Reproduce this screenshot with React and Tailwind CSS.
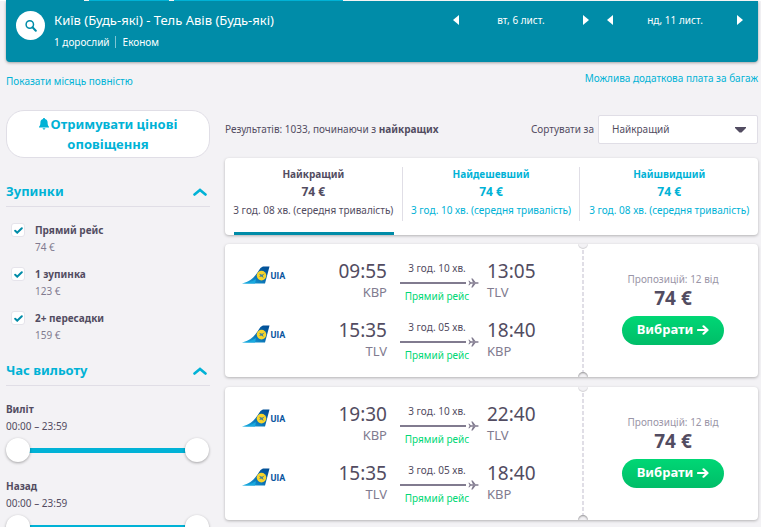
import { useState } from "react";

const STOPS = [
  { id: "direct", label: "Прямий рейс", price: "74 €" },
  { id: "one", label: "1 зупинка", price: "123 €" },
  { id: "two", label: "2+ пересадки", price: "159 €" },
];

const SORTS = [
  { id: "best", label: "Найкращий", price: "74 €", time: "3 год. 08 хв. (середня тривалість)" },
  { id: "cheap", label: "Найдешевший", price: "74 €", time: "3 год. 10 хв. (середня тривалість)" },
  { id: "fast", label: "Найшвидший", price: "74 €", time: "3 год. 08 хв. (середня тривалість)" },
];

const FLIGHTS = [
  {
    id: 1,
    price: "74 €",
    legs: [
      { depart: "09:55", from: "KBP", time: "3 год. 10 хв.", arrive: "13:05", to: "TLV" },
      { depart: "15:35", from: "TLV", time: "3 год. 05 хв.", arrive: "18:40", to: "KBP" },
    ],
  },
  {
    id: 2,
    price: "74 €",
    legs: [
      { depart: "19:30", from: "KBP", time: "3 год. 10 хв.", arrive: "22:40", to: "TLV" },
      { depart: "15:35", from: "TLV", time: "3 год. 05 хв.", arrive: "18:40", to: "KBP" },
    ],
  },
];

const Triangle = ({ left }) => (
  <svg width="6" height="10" viewBox="0 0 6 10" fill="currentColor" aria-hidden="true">
    <path d={left ? "M6 0v10L0 5z" : "M0 0v10l6-5z"} />
  </svg>
);

const UiaLogo = () => (
  <svg width="44" height="18" viewBox="0 0 44 18" role="img" aria-label="UIA">
    <defs>
      <linearGradient id="tail" x1="0" y1="1" x2="1" y2="0">
        <stop offset="0" stopColor="#1bb4e6" />
        <stop offset="0.5" stopColor="#0a6cb0" />
        <stop offset="1" stopColor="#004b93" />
      </linearGradient>
    </defs>
    <path d="M0 17.400C8 16 12 11.500 15.500 6.500 18 2.800 19 .5 22 .5h5.500L23 17.400z" fill="url(#tail)" />
    <path d="M0 17.400c6-.2 10-1.600 14-4.400l-1 4.400z" fill="#19a9df" />
    <circle cx="19.500" cy="9.600" r="4.800" fill="#f7d52b" />
    <path d="M17 7.800l3 .9 2.600-1.200-1.900 2.300 1 2.300-2.300-1.700-2.300.6 1.300-1.500z" fill="#3d7f9c" />
    <text
      x="28.500"
      y="13"
      fontSize="9"
      fontWeight="700"
      fill="#0a559f"
      className="font-[Roboto,sans-serif]"
    >
      UIA
    </text>
  </svg>
);

const Plane = () => (
  <svg width="11" height="10" viewBox="0 0 22 20" fill="#817b8f" aria-hidden="true">
    <path d="M3 8.600h15.500c1.800 0 3 .7 3 1.400s-1.200 1.400-3 1.400H3z" />
    <path d="M10 9L6.500.8h2.800L15.500 9zM10 11l-3.500 8.200h2.800L15.500 11z" />
    <path d="M3.200 9.500L.5 5.500h2.200L6.500 9.500zM3.200 10.500L.5 14.500h2.200l3.800-4z" />
  </svg>
);

const DateStepper = ({ label }) => (
  <div className="flex w-[136px] items-center justify-between">
    <button type="button" aria-label="Попередній день">
      <Triangle left />
    </button>
    <span>{label}</span>
    <button type="button" aria-label="Наступний день">
      <Triangle />
    </button>
  </div>
);

const Section = ({ title, children }) => {
  const [open, setOpen] = useState(true);
  return (
    <section>
      <h2 className="border-b border-[#e0dee6]">
        <button
          type="button"
          onClick={() => setOpen(!open)}
          className="flex h-7 w-full items-center justify-between pr-[3px] text-[13px] font-bold text-[#00b2d6]"
        >
          {title}
          <svg width="14" height="8" viewBox="0 0 14 8" className={open ? "" : "rotate-180"} aria-hidden="true">
            <path d="M1.500 6.500L7 2l5.500 4.500" fill="none" stroke="currentColor" strokeWidth="2.600" strokeLinecap="round" />
          </svg>
        </button>
      </h2>
      {open && children}
    </section>
  );
};

const thumb =
  "pointer-events-none col-start-1 row-start-1 h-6 w-full appearance-none bg-transparent [&::-webkit-slider-thumb]:pointer-events-auto [&::-webkit-slider-thumb]:size-6 [&::-webkit-slider-thumb]:appearance-none [&::-webkit-slider-thumb]:rounded-full [&::-webkit-slider-thumb]:bg-white [&::-webkit-slider-thumb]:shadow-[0_1px_3px_#0005]";

const formatTime = (m) =>
  `${String(Math.floor(m / 60)).padStart(2, "0")}:${String(m % 60).padStart(2, "0")}`;

const TimeRange = ({ title }) => {
  const [from, setFrom] = useState(0);
  const [to, setTo] = useState(1439);
  return (
    <div>
      <h3 className="leading-4 font-bold">{title}</h3>
      <p className="mt-px leading-4">
        {formatTime(from)} – {formatTime(to)}
      </p>
      <div className="mt-1 mr-px grid items-center">
        <div className="col-start-1 row-start-1 mx-3 h-[5px] bg-[#00b2d6]" />
        <input
          type="range"
          min="0"
          max="1439"
          value={from}
          aria-label={`${title}: від`}
          onChange={(e) => setFrom(Math.min(Number(e.target.value), to))}
          className={thumb}
        />
        <input
          type="range"
          min="0"
          max="1439"
          value={to}
          aria-label={`${title}: до`}
          onChange={(e) => setTo(Math.max(Number(e.target.value), from))}
          className={thumb}
        />
      </div>
    </div>
  );
};

const Leg = ({ leg }) => (
  <div className="flex h-[42px]">
    <div className="flex-1 pt-1.5 pl-[17px]">
      <UiaLogo />
    </div>
    <div className="text-right">
      <div className="text-[19px] leading-[22px]">{leg.depart}</div>
      <div className="text-[13px] leading-5 text-[#817b8f]">{leg.from}</div>
    </div>
    <div className="mx-2 w-[84px] pl-[5px]">
      <div className="w-[74px] text-center leading-4">{leg.time}</div>
      <div className="flex h-[14px] items-center justify-between">
        <div className="h-0.5 w-[66px] bg-[#817b8f]" />
        <Plane />
      </div>
      <div className="w-[74px] text-center leading-3 text-[#00d775]">Прямий рейс</div>
    </div>
    <div className="w-[95px]">
      <div className="text-[19px] leading-[22px]">{leg.arrive}</div>
      <div className="text-[13px] leading-5 text-[#817b8f]">{leg.to}</div>
    </div>
  </div>
);

const FlightCard = ({ flight }) => (
  <article className="relative flex overflow-hidden rounded bg-white shadow-[0_1px_3px_#0004]">
    <div className="flex flex-1 flex-col gap-[17px] py-4">
      {flight.legs.map((leg, i) => (
        <Leg key={i} leg={leg} />
      ))}
    </div>
    <div className="w-0.5 bg-[repeating-linear-gradient(#e0dee6_0_4px,transparent_4px_6px)]" />
    <div className="flex w-[174px] flex-col items-center justify-center pb-1.5 pl-1">
      <div className="leading-4 text-[#9a95a7]">Пропозицій: 12 від</div>
      <div className="text-[19px] leading-[22px] font-bold">{flight.price}</div>
      <button
        type="button"
        className="mt-[7px] flex h-[29px] w-[102px] items-center justify-center gap-1 rounded-full bg-linear-to-b from-[#00d775] to-[#00bd68] text-[13px] font-bold text-white"
      >
        Вибрати
        <svg width="12" height="10" viewBox="0 0 12 10" aria-hidden="true">
          <path d="M1 5h9M6.500 1.300L10.500 5l-4 3.700" fill="none" stroke="currentColor" strokeWidth="2.200" strokeLinecap="round" strokeLinejoin="round" />
        </svg>
      </button>
    </div>
    <span className="absolute -top-[5px] right-[170px] size-[10px] rounded-full bg-[#f3f2f5] shadow-[inset_0_-1px_1px_#0002]" />
    <span className="absolute right-[170px] -bottom-[5px] size-[10px] rounded-full bg-[#f3f2f5] shadow-[inset_0_1px_2px_#0006]" />
  </article>
);

const App = () => {
  const [stops, setStops] = useState(["direct", "one", "two"]);
  const [sort, setSort] = useState("best");

  const toggleStop = (id) => {
    setStops(stops.includes(id) ? stops.filter((s) => s !== id) : [...stops, id]);
  };

  return (
    <div className="h-screen overflow-hidden bg-[#f3f2f5] font-['Noto_Sans','Open_Sans',sans-serif] text-[10px] text-[#524c61]">
      <div className="flex h-px gap-[5px] bg-white pl-[6px]">
        <div className="w-[78px] bg-[#008ca8]" />
        <div className="w-[80px] bg-[#00b2d6]" />
        <div className="w-[169px] bg-[#00b2d6]" />
      </div>
      <div className="pr-[3px] pl-[6px]">
        <header className="flex h-[61px] items-start rounded-b bg-[#008ca8] pr-[15px] pl-[10px] text-white shadow-[0_1px_3px_#0005]">
          <button
            type="button"
            aria-label="Змінити пошук"
            className="mt-[10px] flex size-[29px] items-center justify-center rounded-full bg-white text-[#008ca8]"
          >
            <svg width="12" height="12" viewBox="0 0 12 12" fill="none" stroke="currentColor" aria-hidden="true">
              <circle cx="4.800" cy="4.500" r="3.700" strokeWidth="1.500" />
              <path d="M7.500 7.300l3.300 3.400" strokeWidth="2" strokeLinecap="round" />
            </svg>
          </button>
          <div className="mt-[9px] ml-[9px] flex-1">
            <h1 className="text-[13px] leading-5">Київ (Будь-які) - Тель Авів (Будь-які)</h1>
            <p className="mt-1 flex items-center leading-4">
              <span className="border-r border-[#7fc5d3] pr-[5px] leading-3">1 дорослий</span>
              <span className="pl-[7px]">Економ</span>
            </p>
          </div>
          <div className="mt-[9px] flex h-5 gap-[18px]">
            <DateStepper label="вт, 6 лист." />
            <DateStepper label="нд, 11 лист." />
          </div>
        </header>

        <div className="flex h-12 justify-between pt-2 leading-4 text-[#00b2d6]">
          <a href="#month" className="mt-[3px]">Показати місяць повністю</a>
          <a href="#baggage">Можлива додаткова плата за багаж</a>
        </div>

        <div className="flex items-start gap-[15px]">
          <aside className="w-[204px] shrink-0">
            <button
              type="button"
              className="h-12 w-full rounded-[18px] border border-[#e0dee6] bg-white px-6 text-[13px] leading-5 font-bold text-[#00b2d6]"
            >
              <svg width="10" height="12" viewBox="0 0 10 12" fill="currentColor" className="mr-0.5 inline align-[-1px]" aria-hidden="true">
                <path d="M5 0c.7 0 1 .4 1 1 1.800.4 2.600 1.800 2.600 3.500 0 2.300.4 3.200 1.400 4.300v.7H0v-.7c1-1.100 1.400-2 1.400-4.300C1.400 2.800 2.200 1.400 4 1c0-.6.3-1 1-1zM3.600 10.300h2.800C6.300 11.200 5.700 11.600 5 11.600s-1.300-.4-1.400-1.300z" />
              </svg>
              Отримувати цінові оповіщення
            </button>

            <div className="mt-5">
              <Section title="Зупинки">
                <div className="flex flex-col gap-[11px] pt-[15px] pb-[14px]">
                  {STOPS.map((stop) => (
                    <label key={stop.id} className="grid grid-cols-[24px_1fr] items-center pl-[5px]">
                      <span className="grid size-[14px] place-items-center">
                        <input
                          type="checkbox"
                          checked={stops.includes(stop.id)}
                          onChange={() => toggleStop(stop.id)}
                          className="peer col-start-1 row-start-1 size-[14px] appearance-none rounded-[3px] border border-[#e6e4eb] bg-white"
                        />
                        <svg width="9" height="7" viewBox="0 0 9 7" className="pointer-events-none invisible col-start-1 row-start-1 text-[#008ca8] peer-checked:visible" aria-hidden="true">
                          <path d="M1.200 3.800l2 1.900 4.600-4.500" fill="none" stroke="currentColor" strokeWidth="2" strokeLinecap="round" />
                        </svg>
                      </span>
                      <span className="leading-4 font-bold">{stop.label}</span>
                      <span className="col-start-2 mt-px leading-4 text-[#817b8f]">{stop.price}</span>
                    </label>
                  ))}
                </div>
              </Section>
              <Section title="Час вильоту">
                <div className="flex flex-col gap-4 pt-[15px]">
                  <TimeRange title="Виліт" />
                  <TimeRange title="Назад" />
                </div>
              </Section>
            </div>
          </aside>

          <main className="min-w-0 flex-1">
            <div className="mt-[5px] flex items-center justify-between">
              <p>
                Результатів: 1033, починаючи з <b>найкращих</b>
              </p>
              <div className="flex items-center gap-1">
                <label htmlFor="sort">Сортувати за</label>
                <div className="grid w-[160px] items-center">
                  <select
                    id="sort"
                    value={sort}
                    onChange={(e) => setSort(e.target.value)}
                    className="col-start-1 row-start-1 h-[29px] w-full appearance-none rounded-xs border border-[#e0dee6] bg-white pl-[13px]"
                  >
                    {SORTS.map((s) => (
                      <option key={s.id} value={s.id}>
                        {s.label}
                      </option>
                    ))}
                  </select>
                  <svg width="11" height="6" viewBox="0 0 11 6" fill="#524c61" className="pointer-events-none col-start-1 row-start-1 mr-3 justify-self-end" aria-hidden="true">
                    <path d="M0 0h11v1L6.500 5.500h-2L0 1z" />
                  </svg>
                </div>
              </div>
            </div>

            <div className="mt-[14px] flex h-[77px] rounded bg-white shadow-[0_1px_3px_#0004]">
              {SORTS.map((s, i) => (
                <button
                  key={s.id}
                  type="button"
                  onClick={() => setSort(s.id)}
                  className={`flex flex-1 flex-col pt-[9px] ${sort === s.id ? "" : "text-[#00b2d6]"}`}
                >
                  <span className={`w-full flex-1 ${i < 2 ? "border-r border-[#e0dee6]" : ""}`}>
                    <span className="block leading-[14px] font-bold">{s.label}</span>
                    <span className="block pt-px text-xs leading-5 font-bold">{s.price}</span>
                    <span className="block leading-4 whitespace-nowrap">{s.time}</span>
                  </span>
                  <span className="flex h-[14px] w-full items-end px-[9px]">
                    <span className={`h-[3px] w-full ${sort === s.id ? "bg-[#008ca8]" : ""}`} />
                  </span>
                </button>
              ))}
            </div>

            <div className="mt-[9px] flex flex-col gap-[10px]">
              {FLIGHTS.map((flight) => (
                <FlightCard key={flight.id} flight={flight} />
              ))}
            </div>
          </main>
        </div>
      </div>
    </div>
  );
};

export default App;
